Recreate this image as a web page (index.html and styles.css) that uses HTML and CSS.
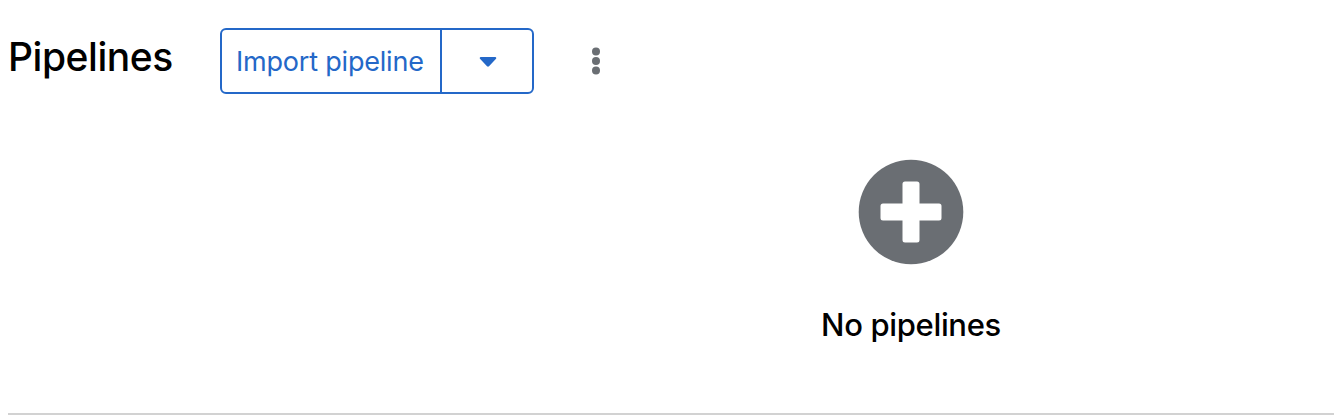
FILE: index.html
```html
<!DOCTYPE html>
<html lang="en">
<head>
<meta charset="utf-8">
<title>Pipelines</title>
<link rel="stylesheet" href="styles.css">
</head>
<body>
<main class="card">
  <header class="header">
    <h1 class="title"><span class="title-text">Pipelines</span></h1>
    <div class="split">
      <button class="split-action"><span class="action-text">Import pipeline</span></button>
      <button class="split-toggle" aria-label="More import options"><svg width="18" height="10" viewBox="0 0 18 10"><path d="M1.6 0H16.4Q18 .6 16.8 1.9L10 9.3Q9 10.2 8 9.3L1.2 1.9Q0 .6 1.6 0Z" fill="currentColor"/></svg></button>
    </div>
    <button class="kebab" aria-label="Actions"><svg width="10" height="28" viewBox="0 0 10 28" fill="currentColor"><circle cx="5" cy="4.500" r="4"/><circle cx="5" cy="14" r="4"/><circle cx="5" cy="23.500" r="4"/></svg></button>
  </header>
  <section class="empty">
    <svg class="empty-icon" width="106" height="106" viewBox="0 0 106 106"><circle cx="53" cy="53" r="52.300" fill="#6a6e73"/><path d="M47 22.500H59Q61.500 22.500 61.500 25V44.500H81Q83.500 44.500 83.500 47V59Q83.500 61.500 81 61.500H61.500V81Q61.500 83.500 59 83.500H47Q44.500 83.500 44.500 81V61.500H25Q22.500 61.500 22.500 59V47Q22.500 44.500 25 44.500H44.500V25Q44.500 22.500 47 22.500Z" fill="#fff"/></svg>
    <h2 class="empty-title"><span class="empty-text">No pipelines</span></h2>
  </section>
</main>
</body>
</html>
```

FILE: styles.css
```css
* { box-sizing: border-box; }
body { margin: 0; background: #fff; color: #000; font-family: Inter, sans-serif; overflow: hidden; }
button { font: inherit; border: 0; background: none; padding: 0; color: inherit; }
.card { height: 415px; margin-left: 8px; border-bottom: 2px solid #d2d2d2; }
.header { display: flex; padding-top: 28px; height: 94px; }
.title { margin: 0; width: 212px; font: 500 39px/58px Inter, sans-serif; white-space: nowrap; letter-spacing: -0.45px; }
.split { display: flex; width: 314px; height: 66px; border: 2px solid #2468c8; border-radius: 6px; color: #2468c8; }
.split-action { width: 220px; padding-left: 14px; border-right: 2px solid #2468c8; font-size: 27px; letter-spacing: -0.2px; text-align: left; white-space: nowrap; }
.split-toggle { flex: 1; display: flex; align-items: center; justify-content: center; padding: 2px 0 0 2px; }
.kebab { width: 32px; margin-left: 46px; display: flex; align-items: center; justify-content: center; color: #6a6e73; }
.empty { width: 1326px; padding: 65px 0 0 480px; display: flex; flex-direction: column; align-items: center; }
.empty-icon { display: block; }
.empty-title { margin: 40px 0 0; font: 500 31px/40px Inter, sans-serif; letter-spacing: -0.35px; white-space: nowrap; }
```
